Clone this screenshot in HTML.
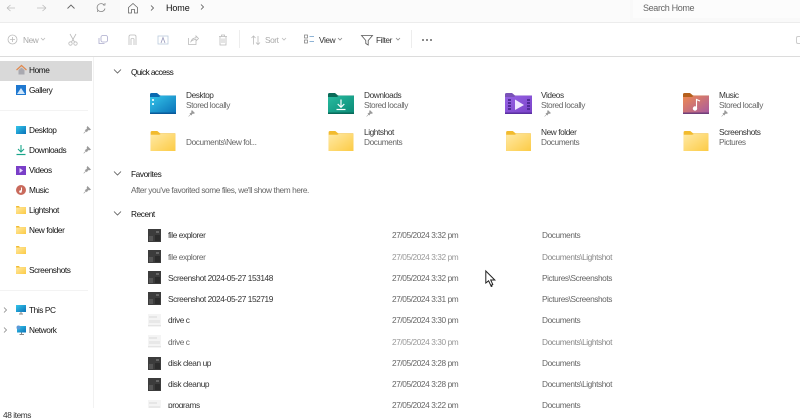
<!DOCTYPE html>
<html><head><meta charset="utf-8">
<style>
html,body{margin:0;padding:0;background:#fff}
#p{position:relative;width:800px;height:420px;overflow:hidden;background:#fff;font-family:"Liberation Sans",sans-serif;font-size:8.3px;letter-spacing:-.42px;color:#333;filter:blur(.3px)}
#p div,#p svg{position:absolute}
.t{white-space:nowrap;line-height:11px}
.d{color:#111}
.g{color:#666}
.s{color:#aaa}
svg{overflow:visible}
.st{fill:none;stroke:#bbb;stroke-width:.8}
.st2{fill:none;stroke:#555;stroke-width:.8}
</style></head><body>
<div id="p">
<svg width="0" height="0"><defs>
<linearGradient id="y" x1="0" y1="0" x2="1" y2="1"><stop offset="0" stop-color="#ffe9a5"/><stop offset="1" stop-color="#fccb45"/></linearGradient>
<linearGradient id="b" x1="0" y1="0" x2="1" y2="1"><stop offset="0" stop-color="#35c6ea"/><stop offset="1" stop-color="#0a72b8"/></linearGradient>
<linearGradient id="gr" x1="0" y1="0" x2="1" y2="1"><stop offset="0" stop-color="#28bca0"/><stop offset="1" stop-color="#0b8a76"/></linearGradient>
<linearGradient id="pu" x1="0" y1="0" x2="1" y2="1"><stop offset="0" stop-color="#9663e4"/><stop offset="1" stop-color="#7a42c8"/></linearGradient>
<linearGradient id="mu" x1="0" y1="0" x2="1" y2="1"><stop offset="0" stop-color="#ef8a50"/><stop offset="1" stop-color="#a85aa0"/></linearGradient>
<symbol id="fy" viewBox="0 0 26 21"><path d="M0 1.500Q0 0 1.500 0H7L10 2.500H26V21H0Z" fill="#f2bb2e"/><path d="M0 4H9L11 3H26V21H0Z" fill="url(#y)"/></symbol>
<symbol id="pin" viewBox="0 0 8 8"><path d="M4.500 .5L7.500 3.500L6.500 4L5 3.800L3.800 5.800L2.200 4.200L4.200 3L4 1.500ZM3 5L.7 7.300" fill="#999" stroke="#999" stroke-width=".6"/></symbol>
<symbol id="th" viewBox="0 0 13 13"><rect width="13" height="13" fill="#3c3c3c"/><rect x="1" y="7" width="4" height="5" fill="#555"/><rect x="8" y="2" width="3" height="2" fill="#666"/><rect x="7" y="6" width="5" height="6" fill="#2c2c2c"/></symbol>
<symbol id="thl" viewBox="0 0 13 13"><rect width="13" height="13" fill="#f4f4f4"/><rect x="1" y="2" width="8" height="2" fill="#e6e6e6"/><rect x="1" y="6" width="11" height="3" fill="#e8e8e8"/><rect y="11" width="13" height="1" fill="#e4e4e4"/></symbol>
</defs></svg>

<!-- top bar -->
<div style="left:0;top:0;width:800px;height:22px;background:#f9f9f9"></div>
<div style="left:120px;top:0;width:510px;height:22px;background:#fbfbfb"></div>
<div style="left:633px;top:0;width:167px;height:18px;background:#fcfcfc"></div>
<div style="left:0;top:22px;width:800px;height:1px;background:#ececec"></div>
<svg style="left:4px;top:1px" width="14" height="14" viewBox="0 0 14 14"><path class="st" d="M3 7H11M3 7L6.500 4M3 7L6.500 10"/></svg>
<svg style="left:34px;top:1px" width="14" height="14" viewBox="0 0 14 14"><path class="st" d="M12 7H3M12 7L8.500 4M12 7L8.500 10"/></svg>
<svg style="left:64px;top:0" width="14" height="14" viewBox="0 0 14 14"><path fill="none" stroke="#666" stroke-width=".9" d="M3.500 8.500L7 5L10.500 8.500"/></svg>
<svg style="left:94px;top:1px" width="14" height="14" viewBox="0 0 14 14"><path fill="none" stroke="#888" stroke-width=".8" d="M10.500 4.500A4 4 0 1 0 11 7.500M9 4H11V2M3.500 9.500V11"/></svg>
<svg style="left:126px;top:1px" width="14" height="14" viewBox="0 0 14 14"><path fill="none" stroke="#666" stroke-width=".8" d="M2.500 6.500L7 2.500L11.500 6.500V12H8.500V8.500H5.500V12H2.500Z"/></svg>
<svg style="left:148px;top:3px" width="8" height="10" viewBox="0 0 8 10"><path fill="none" stroke="#555" stroke-width=".8" d="M3 2.500L5.500 5L3 7.500"/></svg>
<div class="t d" style="left:166px;top:3px;font-size:9px;letter-spacing:-.1px">Home</div>
<svg style="left:198px;top:2px" width="8" height="10" viewBox="0 0 8 10"><path fill="none" stroke="#555" stroke-width=".8" d="M3 2.500L5.500 5L3 7.500"/></svg>
<div class="t" style="left:643px;top:3px;font-size:9px;letter-spacing:-.35px;color:#666">Search Home</div>

<!-- toolbar -->
<svg style="left:6px;top:33px" width="14" height="14" viewBox="0 0 14 14"><circle cx="6.500" cy="6.500" r="4.500" class="st"/><path class="st" d="M6.500 4V9M4 6.500H9"/></svg>
<div class="t s" style="left:23px;top:35px">New</div>
<svg style="left:40px;top:37px" width="6" height="5" viewBox="0 0 6 5"><path class="st" d="M1 1L3 3L5 1"/></svg>
<svg style="left:66px;top:33px" width="14" height="14" viewBox="0 0 14 14"><path class="st" d="M4 1L8.500 9M10 1L5.500 9"/><circle cx="4.500" cy="10.500" r="1.700" class="st"/><circle cx="9.500" cy="10.500" r="1.700" class="st"/></svg>
<svg style="left:96px;top:33px" width="14" height="14" viewBox="0 0 14 14"><rect x="5" y="2.500" width="6.500" height="6.500" rx="1.800" fill="none" stroke="#aac" stroke-width=".8"/><path fill="none" stroke="#aac" stroke-width=".8" d="M3 5V10.500H8.500"/></svg>
<svg style="left:126px;top:33px" width="14" height="14" viewBox="0 0 14 14"><path class="st" d="M3 12V3.500Q3 2 4.500 2H8.500Q10 2 10 3.500V12M5 12V6Q6.500 4.500 8 6V12"/></svg>
<svg style="left:156px;top:33px" width="14" height="14" viewBox="0 0 14 14"><rect x="2" y="3" width="10" height="8" fill="none" stroke="#bcd" stroke-width=".8"/><path fill="none" stroke="#99b" stroke-width=".8" d="M5 10L7 4.500L9 10"/></svg>
<svg style="left:186px;top:33px" width="14" height="14" viewBox="0 0 14 14"><path class="st" d="M2.500 5V11.500H10V8M5 8.500Q6 5 10 4.800V3L12.500 5.500L10 8V6.500Q7 6.500 5 8.500Z"/></svg>
<svg style="left:216px;top:33px" width="14" height="14" viewBox="0 0 14 14"><path class="st" d="M3 3.500H11M5.500 3.500V2H8.500V3.500M4 3.500V12H10V3.500M6 5.500V10M8 5.500V10"/></svg>
<div style="left:239px;top:30px;width:1px;height:18px;background:#ededed"></div>
<svg style="left:249px;top:33px" width="14" height="14" viewBox="0 0 14 14"><path class="st" d="M4.500 11.500V3M2.500 5L4.500 3L6.500 5M9 3V11.500M7 9.500L9 11.500L11 9.500"/></svg>
<div class="t s" style="left:265px;top:35px">Sort</div>
<svg style="left:281px;top:37px" width="6" height="5" viewBox="0 0 6 5"><path class="st" d="M1 1L3 3L5 1"/></svg>
<svg style="left:303px;top:33px" width="14" height="14" viewBox="0 0 14 14"><rect x="1.500" y="2" width="3" height="3" fill="none" stroke="#777" stroke-width=".7"/><rect x="1.500" y="7" width="3" height="3" fill="none" stroke="#777" stroke-width=".7"/><path fill="none" stroke="#6a9ac8" stroke-width=".8" d="M6.500 3.500H11M6.500 8.500H11"/></svg>
<div class="t" style="left:319px;top:35px">View</div>
<svg style="left:337px;top:37px" width="6" height="5" viewBox="0 0 6 5"><path fill="none" stroke="#888" stroke-width=".8" d="M1 1L3 3L5 1"/></svg>
<svg style="left:360px;top:33px" width="14" height="14" viewBox="0 0 14 14"><path class="st2" d="M1.500 2.500H12.500L8.200 7.500V12L5.800 10.500V7.500Z"/></svg>
<div class="t" style="left:376px;top:35px">Filter</div>
<svg style="left:395px;top:37px" width="6" height="5" viewBox="0 0 6 5"><path fill="none" stroke="#888" stroke-width=".8" d="M1 1L3 3L5 1"/></svg>
<div style="left:411px;top:30px;width:1px;height:18px;background:#ededed"></div>
<div style="left:422px;top:39px;width:2px;height:2px;background:#666;border-radius:1px"></div>
<div style="left:426px;top:39px;width:2px;height:2px;background:#666;border-radius:1px"></div>
<div style="left:430px;top:39px;width:2px;height:2px;background:#666;border-radius:1px"></div>
<div style="left:796px;top:36px;width:6px;height:6px;border:1px solid #ccc;border-radius:2px"></div>
<div style="left:0;top:56px;width:800px;height:1px;background:#dcdcdc"></div>

<!-- sidebar -->
<div style="left:93px;top:57px;width:1px;height:351px;background:#f2f2f2"></div>
<div style="left:0;top:61px;width:92px;height:20px;background:#d9d9d9"></div>
<svg style="left:16px;top:64px" width="11" height="12" viewBox="0 0 11 12"><path d="M.5 6L5.500 1.500L10.500 6" fill="none" stroke="#e08a50" stroke-width="1.300"/><path d="M2.500 6L5.500 3.500L8.500 6V10.500H2.500Z" fill="#a9a9b0"/></svg>
<div class="t d" style="left:29px;top:65px">Home</div>
<svg style="left:16px;top:85px" width="10" height="10" viewBox="0 0 10 10"><rect width="10" height="10" fill="#1f78d0"/><path d="M1 9L5 3L9 9Z" fill="#cfe6fa"/></svg>
<div class="t d" style="left:29px;top:85px">Gallery</div>
<div style="left:0;top:110px;width:88px;height:1px;background:#f3f3f3"></div>

<svg style="left:16px;top:126px" width="10" height="8" viewBox="0 0 10 8"><rect width="10" height="8" fill="url(#b)"/></svg>
<div class="t d" style="left:29px;top:125px">Desktop</div>
<svg style="left:83px;top:126px" width="8" height="8"><use href="#pin"/></svg>
<svg style="left:16px;top:144px" width="10" height="12" viewBox="0 0 10 12"><path d="M5 1V8M2 5L5 8L8 5" fill="none" stroke="#1aa58a" stroke-width="1.100"/><path d="M.5 10.500H9.500" stroke="#1aa58a" stroke-width="1.200"/></svg>
<div class="t d" style="left:29px;top:145px">Downloads</div>
<svg style="left:83px;top:146px" width="8" height="8"><use href="#pin"/></svg>
<svg style="left:16px;top:166px" width="10" height="9" viewBox="0 0 10 9"><rect width="10" height="9" fill="#7a3fc8"/><path d="M3.500 2L7 4.500L3.500 7Z" fill="#e8d8ff"/></svg>
<div class="t d" style="left:29px;top:165px">Videos</div>
<svg style="left:83px;top:166px" width="8" height="8"><use href="#pin"/></svg>
<svg style="left:16px;top:185px" width="10" height="10" viewBox="0 0 10 10"><circle cx="5" cy="5" r="5" fill="#c96a5c"/><circle cx="4.500" cy="6.500" r="1.300" fill="#fff"/><path d="M5.500 6V2.500" stroke="#fff"/></svg>
<div class="t d" style="left:29px;top:185px">Music</div>
<svg style="left:83px;top:186px" width="8" height="8"><use href="#pin"/></svg>
<svg style="left:16px;top:206px" width="10" height="8"><use href="#fy" width="10" height="8"/></svg>
<div class="t d" style="left:29px;top:205px">Lightshot</div>
<svg style="left:16px;top:226px" width="10" height="8"><use href="#fy" width="10" height="8"/></svg>
<div class="t d" style="left:29px;top:225px">New folder</div>
<svg style="left:16px;top:246px" width="10" height="8"><use href="#fy" width="10" height="8"/></svg>
<svg style="left:16px;top:266px" width="10" height="8"><use href="#fy" width="10" height="8"/></svg>
<div class="t d" style="left:29px;top:265px">Screenshots</div>
<div style="left:0;top:290px;width:88px;height:1px;background:#f3f3f3"></div>

<svg style="left:2px;top:306px" width="6" height="8" viewBox="0 0 6 8"><path fill="none" stroke="#888" stroke-width=".8" d="M2 1.500L4.500 4L2 6.500"/></svg>
<svg style="left:16px;top:305px" width="10" height="10" viewBox="0 0 10 10"><rect width="10" height="7" fill="url(#b)"/><path d="M3 9H7M5 7V9" stroke="#888"/></svg>
<div class="t d" style="left:29px;top:305px">This PC</div>
<svg style="left:2px;top:326px" width="6" height="8" viewBox="0 0 6 8"><path fill="none" stroke="#888" stroke-width=".8" d="M2 1.500L4.500 4L2 6.500"/></svg>
<svg style="left:16px;top:325px" width="10" height="10" viewBox="0 0 10 10"><rect x="1" y="1" width="9" height="6.500" fill="url(#b)"/><circle cx="2.500" cy="2.500" r="2" fill="#5a9ad8"/><path d="M3.500 9.500H8M5.500 7.500V9.500" stroke="#888"/></svg>
<div class="t d" style="left:29px;top:325px">Network</div>
<div class="t" style="left:3px;top:410px">48 items</div>

<!-- Section headers -->
<svg style="left:113px;top:68px" width="9" height="7" viewBox="0 0 9 7"><path class="st2" d="M1 1.500L4.500 5L8 1.500"/></svg>
<div class="t d" style="left:131px;top:67px;letter-spacing:-.6px">Quick access</div>
<svg style="left:113px;top:170px" width="9" height="7" viewBox="0 0 9 7"><path class="st2" d="M1 1.500L4.500 5L8 1.500"/></svg>
<div class="t d" style="left:131px;top:169px">Favorites</div>
<div class="t g" style="left:131px;top:185px">After you've favorited some files, we'll show them here.</div>
<svg style="left:113px;top:210px" width="9" height="7" viewBox="0 0 9 7"><path class="st2" d="M1 1.500L4.500 5L8 1.500"/></svg>
<div class="t d" style="left:131px;top:209px">Recent</div>

<!-- Quick access row 1 -->
<svg style="left:150px;top:93px" width="26" height="21" viewBox="0 0 26 21"><path d="M0 1.500Q0 0 1.500 0H7L10 2.500H26V21H0Z" fill="#0a6ab0"/><path d="M0 4H9L11 2.600H26V20H0Z" fill="url(#b)"/><rect y="19.500" width="26" height="1.500" fill="#0a5a9a"/><rect x="2" y="6" width="2" height="2" fill="#cdf0fa"/><rect x="2" y="10" width="2" height="2" fill="#cdf0fa"/></svg>
<div class="t" style="left:186px;top:90px">Desktop</div>
<div class="t g" style="left:186px;top:100px">Stored locally</div>
<svg style="left:188px;top:110px" width="7" height="7"><use href="#pin" width="7" height="7"/></svg>

<svg style="left:328px;top:93px" width="26" height="21" viewBox="0 0 26 21"><path d="M0 1.500Q0 0 1.500 0H7L10 2.500H26V21H0Z" fill="#0a6a58"/><path d="M0 4H9L11 2.600H26V20H0Z" fill="url(#gr)"/><rect y="19.500" width="26" height="1.500" fill="#086a5a"/><path d="M13 6.500V14M9.700 11L13 14.300L16.300 11" fill="none" stroke="#fff" stroke-width="1.200"/><path d="M8.500 16.500H17.500" stroke="#fff" stroke-width="1.200"/></svg>
<div class="t" style="left:364px;top:90px">Downloads</div>
<div class="t g" style="left:364px;top:100px">Stored locally</div>
<svg style="left:366px;top:110px" width="7" height="7"><use href="#pin" width="7" height="7"/></svg>

<svg style="left:505px;top:93px" width="27" height="21" viewBox="0 0 27 21"><path d="M0 1.500Q0 0 1.500 0H7L10 2.500H27V21H0Z" fill="#7a52b8"/><path d="M0 4H9L11 2.600H27V20H0Z" fill="url(#pu)"/><rect y="19.500" width="27" height="1.500" fill="#5a30a0"/><path d="M10 6.500L19 12L10 17Z" fill="#efe6ff"/><path d="M3 7H6M3 10H6M3 13H6M3 16H6M22 7H25M22 10H25M22 13H25M22 16H25" stroke="#4a2590" stroke-width="1.800"/></svg>
<div class="t" style="left:541px;top:90px">Videos</div>
<div class="t g" style="left:541px;top:100px">Stored locally</div>
<svg style="left:544px;top:110px" width="7" height="7"><use href="#pin" width="7" height="7"/></svg>

<svg style="left:683px;top:93px" width="26" height="21" viewBox="0 0 26 21"><path d="M0 1.500Q0 0 1.500 0H7L10 2.500H26V21H0Z" fill="#b5601c"/><path d="M0 4H9L11 2.600H26V20H0Z" fill="url(#mu)"/><rect y="19.500" width="26" height="1.500" fill="#70407a"/><circle cx="12" cy="15.500" r="2.200" fill="#fff"/><path d="M13.500 15V6.500L17 8" fill="none" stroke="#fff" stroke-width="1.100"/></svg>
<div class="t" style="left:719px;top:90px">Music</div>
<div class="t g" style="left:719px;top:100px">Stored locally</div>
<svg style="left:721px;top:110px" width="7" height="7"><use href="#pin" width="7" height="7"/></svg>

<!-- row 2 -->
<svg style="left:150px;top:131px" width="26" height="20"><use href="#fy" width="26" height="20"/></svg>
<div class="t g" style="left:186px;top:137px">Documents\New fol...</div>
<svg style="left:328px;top:131px" width="26" height="20"><use href="#fy" width="26" height="20"/></svg>
<div class="t" style="left:364px;top:127px">Lightshot</div>
<div class="t g" style="left:364px;top:137px">Documents</div>
<svg style="left:505px;top:131px" width="27" height="20"><use href="#fy" width="27" height="20"/></svg>
<div class="t" style="left:541px;top:127px">New folder</div>
<div class="t g" style="left:541px;top:137px">Documents</div>
<svg style="left:683px;top:131px" width="26" height="20"><use href="#fy" width="26" height="20"/></svg>
<div class="t" style="left:719px;top:127px">Screenshots</div>
<div class="t g" style="left:719px;top:137px">Pictures</div>

<!-- Recent list -->
<svg style="left:148px;top:229px" width="13" height="13"><use href="#th"/></svg>
<div class="t" style="left:168px;top:230px">file explorer</div><div class="t g" style="left:392px;top:230px">27/05/2024 3:32 pm</div><div class="t g" style="left:542px;top:230px">Documents</div>

<svg style="left:148px;top:250px" width="13" height="13"><use href="#th"/></svg>
<div class="t g" style="left:168px;top:252px">file explorer</div><div class="t g" style="left:392px;top:252px;color:#999">27/05/2024 3:32 pm</div><div class="t g" style="left:542px;top:252px;color:#888">Documents\Lightshot</div>

<svg style="left:148px;top:271px" width="13" height="13"><use href="#th"/></svg>
<div class="t" style="left:168px;top:273px">Screenshot 2024-05-27 153148</div><div class="t g" style="left:392px;top:273px">27/05/2024 3:32 pm</div><div class="t g" style="left:542px;top:273px">Pictures\Screenshots</div>

<svg style="left:148px;top:292px" width="13" height="13"><use href="#th"/></svg>
<div class="t" style="left:168px;top:294px">Screenshot 2024-05-27 152719</div><div class="t g" style="left:392px;top:294px">27/05/2024 3:31 pm</div><div class="t g" style="left:542px;top:294px">Pictures\Screenshots</div>

<svg style="left:148px;top:314px" width="13" height="13"><use href="#thl"/></svg>
<div class="t" style="left:168px;top:315px">drive c</div><div class="t g" style="left:392px;top:315px">27/05/2024 3:30 pm</div><div class="t g" style="left:542px;top:315px">Documents</div>

<svg style="left:148px;top:335px" width="13" height="13"><use href="#thl"/></svg>
<div class="t g" style="left:168px;top:337px">drive c</div><div class="t g" style="left:392px;top:337px;color:#999">27/05/2024 3:30 pm</div><div class="t g" style="left:542px;top:337px;color:#888">Documents\Lightshot</div>

<svg style="left:148px;top:357px" width="13" height="13"><use href="#th"/></svg>
<div class="t" style="left:168px;top:358px">disk clean up</div><div class="t g" style="left:392px;top:358px">27/05/2024 3:28 pm</div><div class="t g" style="left:542px;top:358px">Documents</div>

<svg style="left:148px;top:378px" width="13" height="13"><use href="#th"/></svg>
<div class="t" style="left:168px;top:379px">disk cleanup</div><div class="t g" style="left:392px;top:379px">27/05/2024 3:28 pm</div><div class="t g" style="left:542px;top:379px">Documents\Lightshot</div>

<svg style="left:148px;top:400px" width="13" height="8"><use href="#thl" width="13" height="13"/></svg>
<div class="t" style="left:168px;top:400px">programs</div><div class="t g" style="left:392px;top:400px">27/05/2024 3:22 pm</div><div class="t g" style="left:542px;top:400px">Documents</div>
<div style="left:94px;top:408px;width:706px;height:12px;background:#fff"></div>

<!-- cursor -->
<svg style="left:485px;top:270px" width="12" height="18" viewBox="0 0 12 18"><path d="M.8 1V13L3.600 10.800L5.800 15.500L7.800 14.500L5.700 10H9.800Z" fill="#fff" stroke="#222" stroke-width="1"/><circle cx="6.500" cy="16" r="1" fill="#222"/></svg>
</div>
</body></html>
